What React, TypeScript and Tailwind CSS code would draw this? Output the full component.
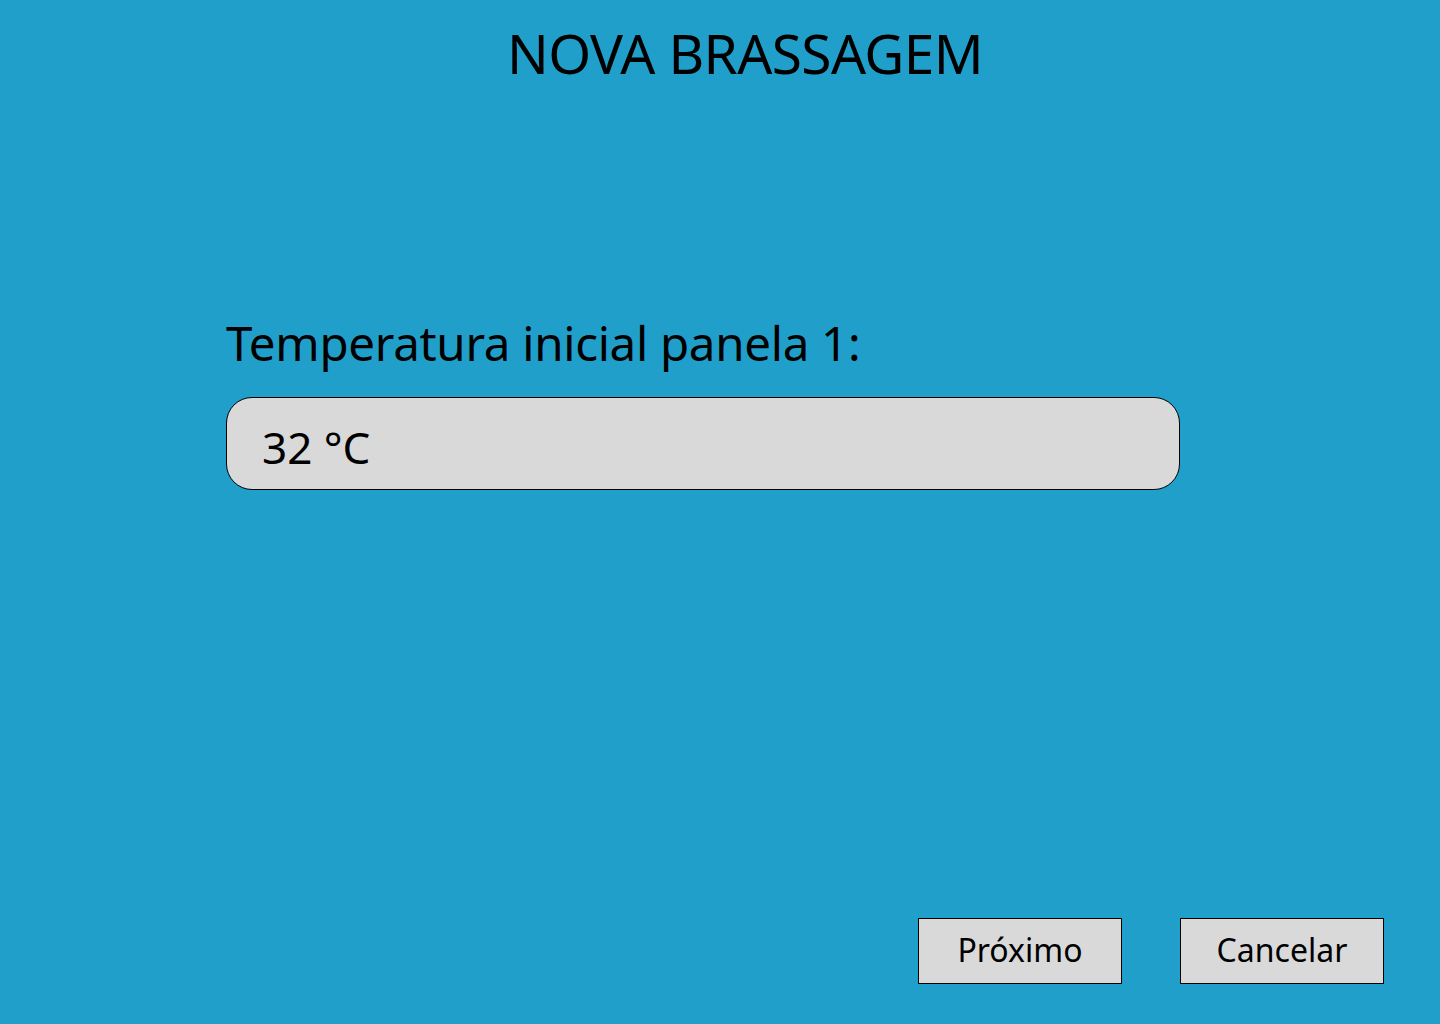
export default function App() {
  return (
    <div className="w-[1440px] h-[1024px] bg-[#209fca] text-black flex flex-col font-['Noto_Sans',sans-serif]">
      <h1 className="pt-[20px] pl-[50px] text-center text-[55px] leading-[66px] tracking-[-0.6px]">
        NOVA BRASSAGEM
      </h1>

      <div className="mt-[227px] ml-[226px] w-[954px]">
        <p className="text-[47.5px] leading-[60px] tracking-[-0.3px]">Temperatura inicial panela 1:</p>
        <div className="mt-[24px] h-[93px] rounded-[26px] border border-black bg-[#d9d9d9] flex items-center pl-[35px]">
          <span className="text-[44px] leading-none pt-[6px]">32 °C</span>
        </div>
      </div>

      <div className="mt-auto mb-[40px] mr-[56px] flex justify-end gap-[58px]">
        <button className="w-[204px] h-[66px] border border-black bg-[#d9d9d9] text-[32px] leading-none pb-[3px]">
          Próximo
        </button>
        <button className="w-[204px] h-[66px] border border-black bg-[#d9d9d9] text-[32px] leading-none pb-[3px]">
          Cancelar
        </button>
      </div>
    </div>
  );
}
